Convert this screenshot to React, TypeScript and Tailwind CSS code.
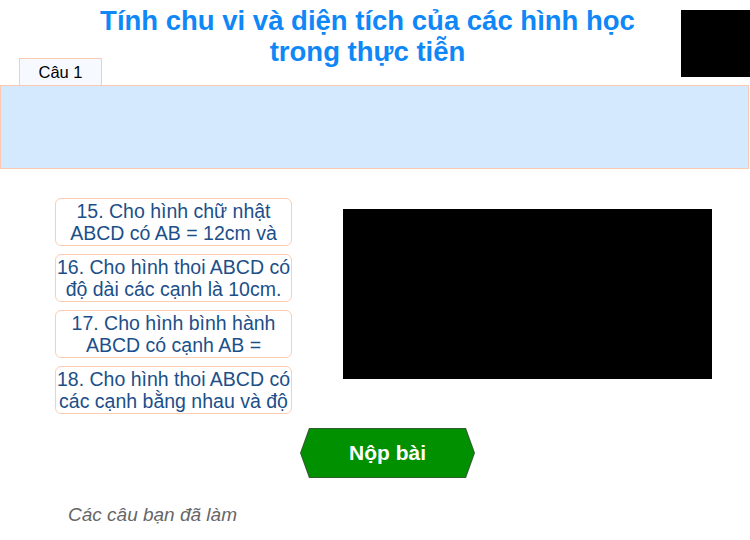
const questions = [
  "15. Cho hình chữ nhật ABCD có AB = 12cm và",
  "16. Cho hình thoi ABCD có độ dài các cạnh là 10cm.",
  "17. Cho hình bình hành ABCD có cạnh AB =",
  "18. Cho hình thoi ABCD có các cạnh bằng nhau và độ",
];

export default function App() {
  return (
    <div className="relative h-[540px] w-[750px] overflow-hidden bg-white font-['Liberation_Sans',Arial,sans-serif]">
      <div className="h-[58px] w-[735px] pt-[5px] text-center">
        <h1 className="mx-auto w-[600px] text-[27.5px] font-bold leading-[31px] text-[#0f87f7]">
          Tính chu vi và diện tích của các hình học trong thực tiễn
        </h1>
      </div>
      <div className="absolute right-0 top-[10px] h-[67px] w-[69px] bg-black" />

      <div className="ml-[19px] flex h-[27px] w-[83px] items-center justify-center border border-b-0 border-[#f9cbb4] bg-[#f6f9ff] text-[16.5px] text-black">
        Câu 1
      </div>
      <div className="h-[84px] w-[749px] border border-[#f9c9b1] bg-[#d4e9fd]" />

      <div className="mt-[29px] flex pl-[55px]">
        <div className="flex w-[237px] flex-col gap-[8px]">
          {questions.map((q) => (
            <div
              key={q}
              className="flex h-[48px] items-center justify-center overflow-hidden rounded-[6px] border-[1.5px] border-[#fbcdb4] text-center text-[19.5px] leading-[22px] text-[#1c4f89]"
            >
              {q}
            </div>
          ))}
        </div>
        <div className="ml-[51px] mt-[11px] h-[170px] w-[369px] bg-black" />
      </div>

      <div className="ml-[300px] mt-[14px] h-[50px] w-[175px] bg-[#2f5f2f] [clip-path:polygon(9px_0,166px_0,100%_50%,166px_100%,9px_100%,0_50%)]">
        <button className="flex h-full w-full items-center justify-center bg-[#009000] text-[21px] font-bold text-white [clip-path:polygon(10px_1px,165px_1px,174px_50%,165px_49px,10px_49px,1px_50%)]">
          Nộp bài
        </button>
      </div>

      <p className="ml-[68px] mt-[26px] text-[19px] italic leading-[22px] text-[#666666]">
        Các câu bạn đã làm
      </p>
    </div>
  );
}
